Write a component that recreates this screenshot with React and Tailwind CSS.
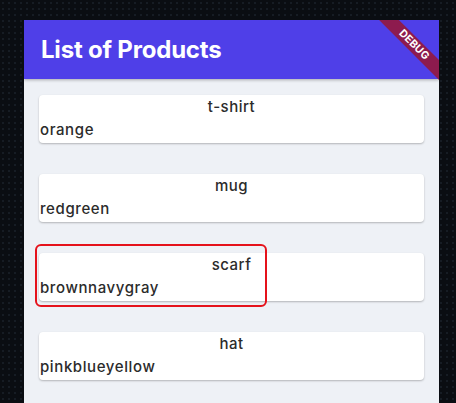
import React from "react"

const products = [
  { name: "t-shirt", colors: ["orange"] },
  { name: "mug", colors: ["red", "green"] },
  { name: "scarf", colors: ["brown", "navy", "gray"], highlight: true },
  { name: "hat", colors: ["pink", "blue", "yellow"] },
]

function ProductCard({ product }) {
  return (
    <div className="relative h-[48px] bg-white rounded-[4px] shadow-[0_1px_2px_rgba(0,0,0,0.25)] pt-[2px]">
      <p className="text-center text-[15px] leading-[20px] font-medium text-[#2b2b2b] tracking-[0.5px]">{product.name}</p>
      <p className="text-[15px] leading-[21px] font-medium text-[#2b2b2b] tracking-[0.6px] pl-[1px] mt-[2px]">
        {product.colors.join("")}
      </p>
      {product.highlight && (
        <div className="absolute left-[-4px] top-[-9px] w-[232px] h-[63px] border-2 border-[#e5121b] rounded-[6px]" />
      )}
    </div>
  )
}

export default function App() {
  return (
    <div
      className="w-[456px] h-[403px] overflow-hidden bg-[#0a0d12] bg-[radial-gradient(#161c24_1px,transparent_1px)] bg-[size:6px_6px] pl-[24px] pr-[17px] pt-[20px]"
      style={{ fontFamily: "Inter, 'Noto Sans', sans-serif" }}
    >
      <div className="relative h-full bg-[#eef1f6] overflow-hidden">
        <header className="h-[59px] bg-[#4f3fe8] flex items-center px-[17px] shadow-[0_1px_3px_rgba(0,0,0,0.3)]">
          <h1 className="text-[24px] font-bold text-white tracking-[-0.2px] pt-[1px]">List of Products</h1>
        </header>
        <div className="absolute right-[-25px] top-[18px] w-[100px] h-[14px] rotate-45 bg-[#8d1b4e] flex items-center justify-center">
          <span className="text-[10.5px] leading-none font-bold text-white tracking-[0.2px]">DEBUG</span>
        </div>
        <div className="px-[15px] pt-[16px] flex flex-col gap-[31px]">
          {products.map((p) => (
            <ProductCard key={p.name} product={p} />
          ))}
        </div>
      </div>
    </div>
  )
}
